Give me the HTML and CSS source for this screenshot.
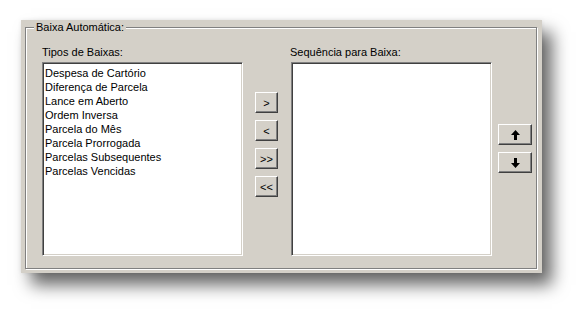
FILE: index.html
```html
<!DOCTYPE html>
<html>
<head>
<meta charset="utf-8">
<link rel="stylesheet" href="styles.css">
</head>
<body>
<div class="panel">
  <fieldset class="group">
    <legend class="legend">Baixa Automática:</legend>
    <div class="row">
      <div class="col">
        <div class="label">Tipos de Baixas:</div>
        <div class="listbox">
          <div class="item">Despesa de Cartório</div>
          <div class="item">Diferença de Parcela</div>
          <div class="item">Lance em Aberto</div>
          <div class="item">Ordem Inversa</div>
          <div class="item">Parcela do Mês</div>
          <div class="item">Parcela Prorrogada</div>
          <div class="item">Parcelas Subsequentes</div>
          <div class="item">Parcelas Vencidas</div>
        </div>
      </div>
      <div class="mid">
        <button class="btn small">&gt;</button>
        <button class="btn small">&lt;</button>
        <button class="btn small">&gt;&gt;</button>
        <button class="btn small">&lt;&lt;</button>
      </div>
      <div class="col">
        <div class="label">Sequência para Baixa:</div>
        <div class="listbox"></div>
      </div>
      <div class="side">
        <button class="btn wide"><svg width="9" height="10" viewBox="0 0 9 10"><path d="M4.5 0 L9 5 L6 5 L6 10 L3 10 L3 5 L0 5 Z" fill="#000"/></svg></button>
        <button class="btn wide"><svg width="9" height="10" viewBox="0 0 9 10"><path d="M4.5 10 L9 5 L6 5 L6 0 L3 0 L3 5 L0 5 Z" fill="#000"/></svg></button>
      </div>
    </div>
  </fieldset>
</div>
</body>
</html>
```
FILE: styles.css
```css
html, body {
  margin: 0;
  padding: 0;
  background: #fff;
}
body {
  font-family: "Liberation Sans", Arial, sans-serif;
  font-size: 11px;
  color: #000;
  padding: 20px 0 40px 21px;
}
.panel {
  width: 521px;
  height: 253px;
  box-sizing: border-box;
  background: #d4d0c8;
  padding: 1px 0 0 4px;
  box-shadow: 0 0 4px rgba(0,0,0,0.08), 10px 12px 16px rgba(0,0,0,0.6);
}
.group {
  margin: 0;
  box-sizing: border-box;
  width: 512px;
  height: 248px;
  border: 1px solid #808080;
  box-shadow: inset 1px 1px 0 #fff, 1px 1px 0 #fff;
  padding: 0 0 0 16px;
  min-width: 0;
}
.legend {
  margin-left: -8px;
  padding: 0 2px;
  background: #d4d0c8;
  line-height: 13px;
}
.row {
  display: flex;
  align-items: flex-start;
  padding-top: 12px;
}
.col {
  display: flex;
  flex-direction: column;
}
.label {
  line-height: 13px;
  height: 13px;
  margin-bottom: 3px;
}
.col + .mid + .col .label {
  margin-left: -1px;
}
.listbox {
  box-sizing: border-box;
  width: 201px;
  height: 194px;
  background: #fff;
  border: 1px solid;
  border-color: #808080 #fff #fff #808080;
  box-shadow: inset 1px 1px 0 #404040, inset -1px -1px 0 #d4d0c8;
  padding: 3px 0 0 2px;
}
.item {
  line-height: 14px;
  height: 14px;
  white-space: nowrap;
}
.mid {
  display: flex;
  flex-direction: column;
  gap: 7px;
  margin: 46px 13px 0 12px;
}
.side {
  display: flex;
  flex-direction: column;
  gap: 7px;
  margin: 78px 0 0 6px;
}
.btn {
  box-sizing: border-box;
  height: 21px;
  padding: 0;
  margin: 0;
  background: #d4d0c8;
  border: 1px solid;
  border-color: #fff #404040 #404040 #fff;
  box-shadow: inset -1px -1px 0 #808080;
  font-family: "Liberation Sans", Arial, sans-serif;
  font-size: 11px;
  color: #000;
  display: flex;
  align-items: center;
  justify-content: center;
}
.small {
  width: 23px;
}
.wide {
  width: 34px;
}
```
